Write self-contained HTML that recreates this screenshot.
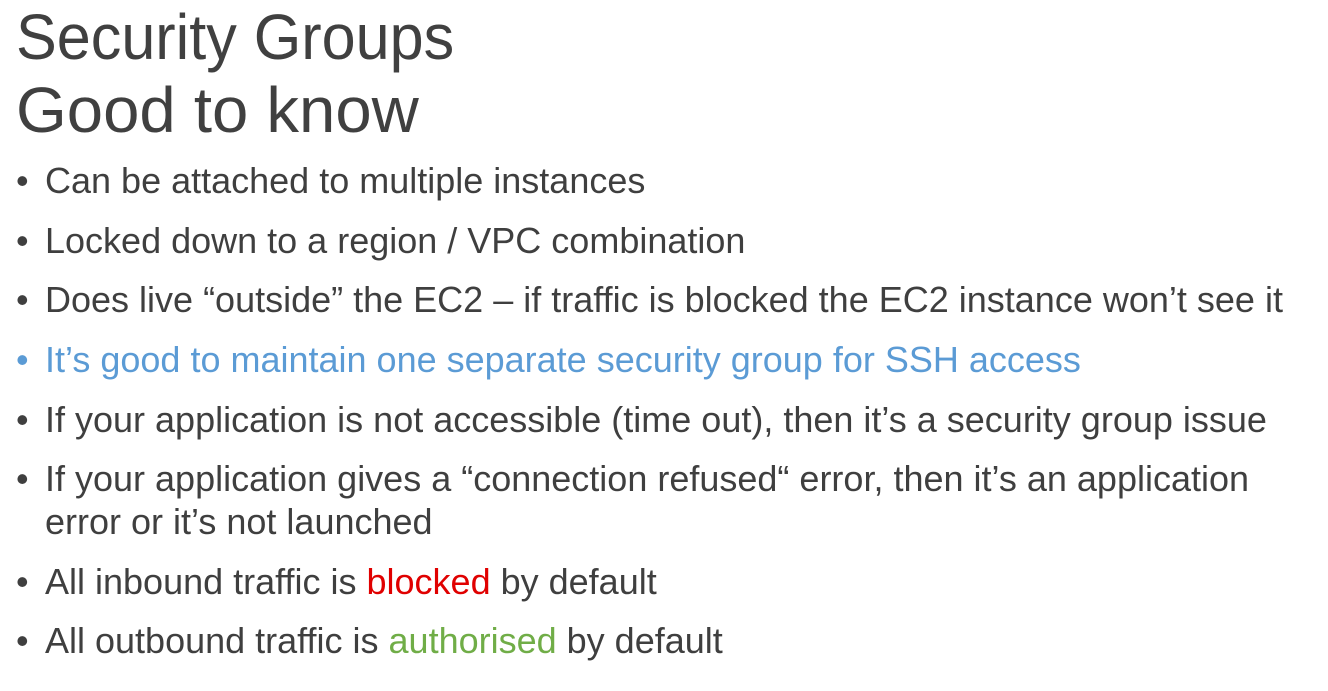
<!DOCTYPE html>
<html><head><meta charset="utf-8"><style>
body{margin:0;width:1328px;height:691px;background:#fff;overflow:hidden;font-family:"Liberation Sans",sans-serif;color:#3f3f3f;position:relative}
.t{position:absolute;left:16px;font-size:64px;line-height:1;white-space:nowrap;color:#404040;transform-origin:left top}
.l{position:absolute;left:16px;font-size:36px;line-height:1;white-space:nowrap;color:#3f3f3f;transform-origin:left top}
.l .b{display:inline-block;width:29px}
.blue{color:#5b9bd5}.red{color:#e00000}.green{color:#70ad47}
</style></head><body>
<div class="t" style="top:5px;transform:scaleX(0.955)">Security Groups</div>
<div class="t" style="top:78px;transform:scaleX(1.02)">Good to know</div>
<div class="l" style="top:163px"><span class="b">•</span>Can be attached to multiple instances</div>
<div class="l" style="top:223px"><span class="b">•</span>Locked down to a region / VPC combination</div>
<div class="l" style="top:282px"><span class="b">•</span>Does live “outside” the EC2 – if traffic is blocked the EC2 instance won’t see it</div>
<div class="l blue" style="top:342px"><span class="b">•</span>It’s good to maintain one separate security group for SSH access</div>
<div class="l" style="top:402px"><span class="b">•</span>If your application is not accessible (time out), then it’s a security group issue</div>
<div class="l" style="top:461px"><span class="b">•</span>If your application gives a “connection refused“ error, then it’s an application</div>
<div class="l" style="top:504px"><span class="b"></span>error or it’s not launched</div>
<div class="l" style="top:564px"><span class="b">•</span>All inbound traffic is <span class="red">blocked</span> by default</div>
<div class="l" style="top:623px"><span class="b">•</span>All outbound traffic is <span class="green">authorised</span> by default</div>
</body></html>
